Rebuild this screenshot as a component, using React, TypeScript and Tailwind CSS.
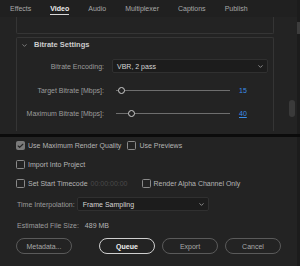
import { ChevronDown, Check } from "lucide-react"

function Checkbox({ checked, label }: { checked?: boolean; label: string }) {
  return (
    <label className="flex items-center gap-[3px]">
      <span
        className={`w-[9px] h-[9px] rounded-[1.5px] border flex items-center justify-center ${
          checked ? "bg-[#7a7a7a] border-[#7a7a7a]" : "border-[#8a8a8a]"
        }`}
      >
        {checked && <Check className="w-[8px] h-[8px] text-[#262626]" strokeWidth={4} />}
      </span>
      <span className="text-[#b4b4b4]">{label}</span>
    </label>
  )
}

function Slider({ knob, value, link }: { knob: number; value: string; link?: boolean }) {
  return (
    <div className="flex items-center">
      <div className="relative w-[114px] h-[9px]">
        <div className="absolute left-0 right-0 top-[4px] h-px bg-[#6e6e6e]" />
        <div
          className="absolute top-[1px] w-[7px] h-[7px] rounded-full border-[1.5px] border-[#cfcfcf] bg-[#232323]"
          style={{ left: knob - 3.5 }}
        />
      </div>
      <span className={`ml-[9px] text-[#3b8ee8] ${link ? "underline underline-offset-1" : ""}`}>{value}</span>
    </div>
  )
}

export default function App() {
  const tabs = ["Effects", "Video", "Audio", "Multiplexer", "Captions", "Publish"]

  return (
    <div
      className="w-[300px] h-[266px] bg-[#232323] flex flex-col overflow-hidden text-[7px] leading-none"
      style={{ fontFamily: '"Liberation Sans", Arial, sans-serif' }}
    >
      {/* Top panel */}
      <div className="h-[134px] flex">
        <div className="flex-1 flex flex-col">
          <div className="h-[17px] bg-[#202020] flex items-center pl-[10px] gap-[19px] shrink-0">
            {tabs.map((t) => (
              <div
                key={t}
                className={`relative h-full flex items-center ${
                  t === "Video" ? "text-[#ececec] font-bold" : "text-[#a8a8a8]"
                }`}
              >
                {t}
                {t === "Video" && <div className="absolute left-0 right-0 bottom-[2px] h-[1.5px] bg-[#d8d8d8]" />}
              </div>
            ))}
          </div>
          <div className="flex-1 flex">
            <div className="flex-1 pl-[16px] pr-[15px]">
              <div className="h-[17px] border-x border-b border-[#353535] rounded-b-[2px]" />
              <div className="mt-[3px] h-[94px] border-x border-t border-[#353535] rounded-t-[2px]">
                <div className="h-[14px] flex items-center gap-[6px] pl-[4px] text-[#cdcdcd] font-bold text-[7.5px]">
                  <ChevronDown className="w-[7px] h-[7px] text-[#9a9a9a]" strokeWidth={2.5} />
                  Bitrate Settings
                </div>
                <div className="grid grid-cols-[87px_1fr] gap-x-[8px] items-center text-[#9c9c9c] mt-[7px]">
                  <div className="text-right h-[14px] flex items-center justify-end">Bitrate Encoding:</div>
                  <div className="h-[14px] w-[156px] bg-[#1c1c1c] border border-[#303030] rounded-[2px] flex items-center justify-between pl-[4px] pr-[3px] text-[#d6d6d6]">
                    VBR, 2 pass
                    <ChevronDown className="w-[7px] h-[7px] text-[#b0b0b0]" strokeWidth={2.5} />
                  </div>
                  <div className="text-right mt-[13px]">Target Bitrate [Mbps]:</div>
                  <div className="mt-[13px] pl-[4px]">
                    <Slider knob={5} value="15" />
                  </div>
                  <div className="text-right mt-[14px]">Maximum Bitrate [Mbps]:</div>
                  <div className="mt-[14px] pl-[4px]">
                    <Slider knob={15} value="40" link />
                  </div>
                </div>
              </div>
            </div>
            <div className="w-[8px] pt-[83px]">
              <div className="w-[6px] h-[17px] rounded-full bg-[#3a3a3a]" />
            </div>
          </div>
        </div>
        <div className="w-[3px] bg-[#1c1c1c] pt-[22px]">
          <div className="h-[12px] bg-[#3c3c3c]" />
        </div>
      </div>

      <div className="h-[3px] bg-[#0b0b0b]" />

      {/* Bottom panel */}
      <div className="flex-1 border-r-[3px] border-[#1c1c1c] pl-[16px] pt-[4px] flex flex-col">
        <div className="flex items-center gap-[6px] h-[9px]">
          <Checkbox checked label="Use Maximum Render Quality" />
          <Checkbox label="Use Previews" />
        </div>
        <div className="mt-[10px] h-[9px] flex items-center">
          <Checkbox label="Import Into Project" />
        </div>
        <div className="mt-[10px] h-[9px] flex items-center">
          <Checkbox label="Set Start Timecode" />
          <span className="ml-[3px] text-[#4a4a4a]">00:00:00:00</span>
          <div className="ml-[14px]">
            <Checkbox label="Render Alpha Channel Only" />
          </div>
        </div>
        <div className="mt-[9px] flex items-center pl-[1px]">
          <span className="text-[#9c9c9c]">Time Interpolation:</span>
          <div className="ml-[2px] h-[14px] w-[132px] bg-[#1c1c1c] border border-[#303030] rounded-[2px] flex items-center justify-between pl-[5px] pr-[3px] text-[#d6d6d6]">
            Frame Sampling
            <ChevronDown className="w-[7px] h-[7px] text-[#b0b0b0]" strokeWidth={2.5} />
          </div>
        </div>
        <div className="mt-[11px] flex items-center pl-[1px] text-[#9c9c9c]">
          <span>Estimated File Size:</span>
          <span className="ml-[6px] text-[#b4b4b4]">489 MB</span>
        </div>
        <div className="mt-[9px] flex items-center">
          <button className="w-[56px] h-[16px] rounded-full border border-[#5a5a5a] text-[#a8a8a8]">Metadata...</button>
          <button className="ml-[27px] w-[56px] h-[16px] rounded-full border-[1.5px] border-[#cfcfcf] text-[#f0f0f0] font-bold">
            Queue
          </button>
          <button className="ml-[7px] w-[56px] h-[16px] rounded-full border border-[#5a5a5a] text-[#a8a8a8]">Export</button>
          <button className="ml-[7px] w-[56px] h-[16px] rounded-full border border-[#5a5a5a] text-[#a8a8a8]">Cancel</button>
        </div>
      </div>
    </div>
  )
}
